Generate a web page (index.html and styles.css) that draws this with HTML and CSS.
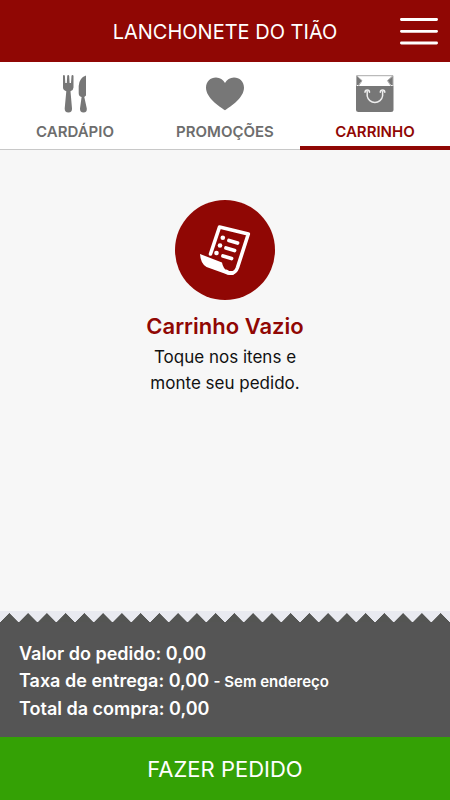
FILE: index.html
```html
<!DOCTYPE html>
<html lang="pt-BR">
<head>
<meta charset="utf-8">
<meta name="viewport" content="width=device-width, initial-scale=1">
<title>Lanchonete do Tião</title>
<link rel="stylesheet" href="styles.css">
</head>
<body>
<header class="topbar">
  <h1 class="topbar-title">LANCHONETE DO TIÃO</h1>
  <button class="menu" type="button" aria-label="Menu">
    <svg width="38" height="28" viewBox="0 0 38 28" fill="none" stroke="#fff" stroke-width="2.8" stroke-linecap="round"><path d="M1.4 2.5H36.6M1.4 14.3H36.6M1.4 26H36.6"/></svg>
  </button>
</header>
<nav class="tabs">
  <a class="tab" href="#cardapio">
    <svg width="38" height="38" viewBox="0 0 38 38" fill="#777"><path d="M7 1Q7 0 7.9 0T8.900 1L9.300 8H10.800L11.200 1Q11.300 0 12.200 0T13.200 1L13.600 8H15L15.500 1Q15.600 0 16.500 0T17.500 1V12.500Q17.500 15 14.500 16.200L16 33.500Q16.200 37.500 12.400 37.500T8.700 33.500L10.300 16.200Q7 15 7 12.500Z"/><path d="M30 .5V20.500L28.300 22L30.800 33.500Q31.200 37.500 27.500 37.500T24 33.500L25.600 22Q22.600 21.500 22.700 18V11Q23 3 30 .5Z"/></svg>
    <span>CARDÁPIO</span>
  </a>
  <a class="tab" href="#promocoes">
    <svg width="38" height="38" viewBox="0 0 38 38" fill="#777"><path d="M19 35.200C13 31.400 0 22.600 0 12.800C0 6.600 4.500 2.500 10 2.500C14 2.500 17.200 4.600 19 8C20.800 4.600 24 2.500 28 2.500C33.500 2.500 38 6.600 38 12.800C38 22.600 25 31.400 19 35.200Z"/></svg>
    <span>PROMOÇÕES</span>
  </a>
  <a class="tab tab-active" href="#carrinho" aria-current="page">
    <svg width="38" height="38" viewBox="0 0 38 38"><path d="M0 11H37.500V34.500Q37.500 37 35 37H2.500Q0 37 0 34.500Z" fill="#777"/><path d="M.5 1L6 5.500L2.500 10H.5ZM37 1L31.500 5.500L35 10H37Z" fill="#777"/><path d="M.5 .7H37M1 1L6 5.700L2.500 11M36.500 1L31.500 5.700L35 11M.5 .7V11M37 .7V11" fill="none" stroke="#aaa" stroke-width="1"/><path d="M9 17.300C9 14.300 13.500 14.300 13.500 17.300M24.300 17.300C24.300 14.300 28.800 14.300 28.800 17.300M11.200 16.500V21A7.800 7.800 0 0 0 26.600 21V16.500" fill="none" stroke="#eee" stroke-width="1.500" stroke-linecap="round"/></svg>
    <span>CARRINHO</span>
  </a>
</nav>
<main class="empty">
  <svg class="badge" width="100" height="100" viewBox="0 0 100 100"><circle cx="50" cy="50" r="50" fill="#900704"/><g fill="none" stroke="#fff" stroke-linecap="round" stroke-linejoin="round"><path d="M35.500 54L44.500 27L73.300 34L62.500 67.500C60 74.500 54.500 73.800 51.500 71.500" stroke-width="3.600"/><path d="M54 40.500L62.500 43M51 48L59.500 50.500M48 56L56.500 58.500" stroke-width="3.800"/></g><g fill="#fff"><circle cx="47.800" cy="37.800" r="2.300"/><circle cx="45" cy="45.500" r="2.300"/><circle cx="41.500" cy="53" r="2.300"/><path d="M25 54L47 62.500Q48 68.500 52.500 71L57 71L59 74.500Q54.500 76 49.500 73.500L31.500 67Q25.500 63.500 25 54Z"/></g></svg>
  <h2 class="empty-title">Carrinho Vazio</h2>
  <p class="empty-text">Toque nos itens e<br>monte seu pedido.</p>
</main>
<footer>
  <div class="zigzag"></div>
  <div class="totals">
    <p>Valor do pedido: 0,00</p>
    <p>Taxa de entrega: 0,00 <small>- Sem endereço</small></p>
    <p>Total da compra: 0,00</p>
  </div>
  <button class="order" type="button">FAZER PEDIDO</button>
</footer>
</body>
</html>
```
FILE: styles.css
```css
* {
  box-sizing: border-box;
  margin: 0;
}

body {
  display: flex;
  flex-direction: column;
  min-height: 100vh;
  background: #f7f7f7;
  color: #111;
  font-family: Inter, "Liberation Sans", sans-serif;
}

button {
  border: 0;
  font-family: inherit;
  cursor: pointer;
}

.topbar {
  display: grid;
  grid-template-columns: 38px 1fr 38px;
  align-items: center;
  padding: 16px 12px;
  background: #900704;
  color: #fff;
}

.topbar-title {
  grid-column: 2;
  padding-top: 2px;
  font-size: 20px;
  font-weight: 400;
  line-height: 28px;
  text-align: center;
}

.menu {
  display: flex;
  padding: 0;
  background: none;
}

.tabs {
  display: grid;
  grid-template-columns: repeat(3, 1fr);
  background: #fff;
}

.tab {
  display: flex;
  flex-direction: column;
  align-items: center;
  gap: 9px;
  height: 88px;
  padding-top: 13px;
  border-bottom: 1px solid #c8c8c8;
  color: #6d6d6d;
  font-size: 15px;
  font-weight: 600;
  line-height: 20px;
  text-decoration: none;
}

.tab-active {
  border-bottom: 4px solid #900704;
  color: #900704;
}

.empty {
  display: flex;
  flex: 1;
  flex-direction: column;
  align-items: center;
  padding: 50px 16px;
  text-align: center;
}

.empty-title {
  margin-top: 12px;
  color: #900704;
  font-size: 22px;
  font-weight: 600;
  line-height: 28px;
}

.empty-text {
  margin-top: 4px;
  font-size: 17px;
  line-height: 26px;
}

.zigzag {
  height: 11px;
  background: #e9eaf0 conic-gradient(from 135deg at 50% 0, #545553 90deg, transparent 0) 0 100% / 19px 9px;
  background-repeat: round no-repeat;
}

.totals {
  padding: 18px 19px 15px;
  background: #555;
  color: #fff;
  font-size: 18px;
  font-weight: 600;
  line-height: 27px;
}

.totals small {
  font-size: 15px;
}

.order {
  display: block;
  width: 100%;
  padding: 17px 16px 15px;
  background: #34a105;
  color: #fff;
  font-size: 22px;
  line-height: 31px;
}
```
